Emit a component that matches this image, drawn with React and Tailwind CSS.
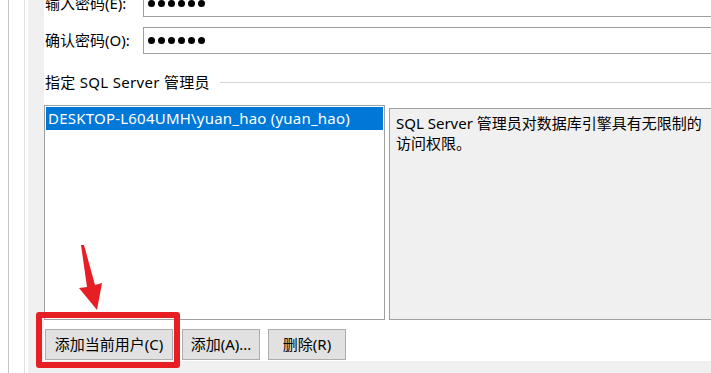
import React from "react";

const font = "font-['Noto_Sans','Noto_Sans_CJK_SC',sans-serif]";

function PasswordRow({ label, className }) {
  return (
    <div className={`flex h-[27px] items-center ${className}`}>
      <span className="w-[99px] pl-px text-[15px] text-black">{label}</span>
      <div className="flex h-full flex-1 items-center gap-[3px] border border-r-0 border-[#a0a0a0] pl-[4px]">
        {[...Array(6)].map((_, i) => (
          <span key={i} className="h-[7px] w-[7px] rounded-full bg-black" />
        ))}
      </div>
    </div>
  );
}

function WinButton({ children, className }) {
  return (
    <button className={`flex h-[31px] items-center justify-center border border-[#adadad] bg-[#e1e1e1] text-[15px] text-black ${className}`}>
      {children}
    </button>
  );
}

export default function App() {
  return (
    <div className={`relative flex h-[373px] w-[711px] overflow-hidden bg-white ${font}`}>
      {/* window frame edges on the left */}
      <div className="w-2" />
      <div className="w-px bg-[#c4c4c8]" />
      <div className="w-[15px]" />
      <div className="w-px bg-[#e2e2e2]" />
      <div className="w-[3px]" />
      <div className="w-[16px] bg-[#f0f0f0]" />

      <div className="flex flex-1 flex-col">
        <PasswordRow label="输入密码(E):" className="mt-[-10px]" />
        <PasswordRow label="确认密码(O):" className="mt-[10px]" />

        <div className="mt-[18px] flex h-[20px] items-center">
          <span className="pl-px text-[15px] tracking-[0.3px] text-black">指定 SQL Server 管理员</span>
          <div className="ml-[10px] h-px flex-1 bg-[#d5d5d5]" />
        </div>

        <div className="mt-[13px] flex items-start">
          <div className="h-[215px] w-[341px] border border-[#a0a0a0] bg-white p-px">
            <div className="flex h-[23px] items-center bg-[#0078d7] pl-[2px] text-[15px] tracking-[0.22px] text-white">
              DESKTOP-L604UMH\yuan_hao (yuan_hao)
            </div>
          </div>
          <div className="ml-[4px] mt-[3px] h-[212px] flex-1 border border-r-0 border-[#a0a0a0] bg-[#f0f0f0] pl-[6px] pt-[4px] text-[15px] leading-[20px] text-black">
            SQL Server 管理员对数据库引擎具有无限制的
            <br />
            访问权限。
          </div>
        </div>

        <div className="mt-[9px] flex">
          <WinButton className="ml-px w-[128px]">添加当前用户(C)</WinButton>
          <WinButton className="ml-[9px] w-[78px]">添加(A)...</WinButton>
          <WinButton className="ml-[8px] w-[78px]">删除(R)</WinButton>
        </div>

        <div className="mt-[1px] flex-1 bg-[#f0f0f0]" />
      </div>

      {/* annotation: red arrow + highlight box */}
      <svg className="pointer-events-none absolute left-[76px] top-[243px]" width="30" height="70" viewBox="0 0 30 70">
        <polygon points="5,2 8,2 19,42 26,40 21,67 3,45 11,44" fill="#e81e25" />
      </svg>
      <div className="pointer-events-none absolute left-[36px] top-[312px] h-[56px] w-[144px] rounded-[3px] border-[6px] border-[#e81e25]" />
    </div>
  );
}
